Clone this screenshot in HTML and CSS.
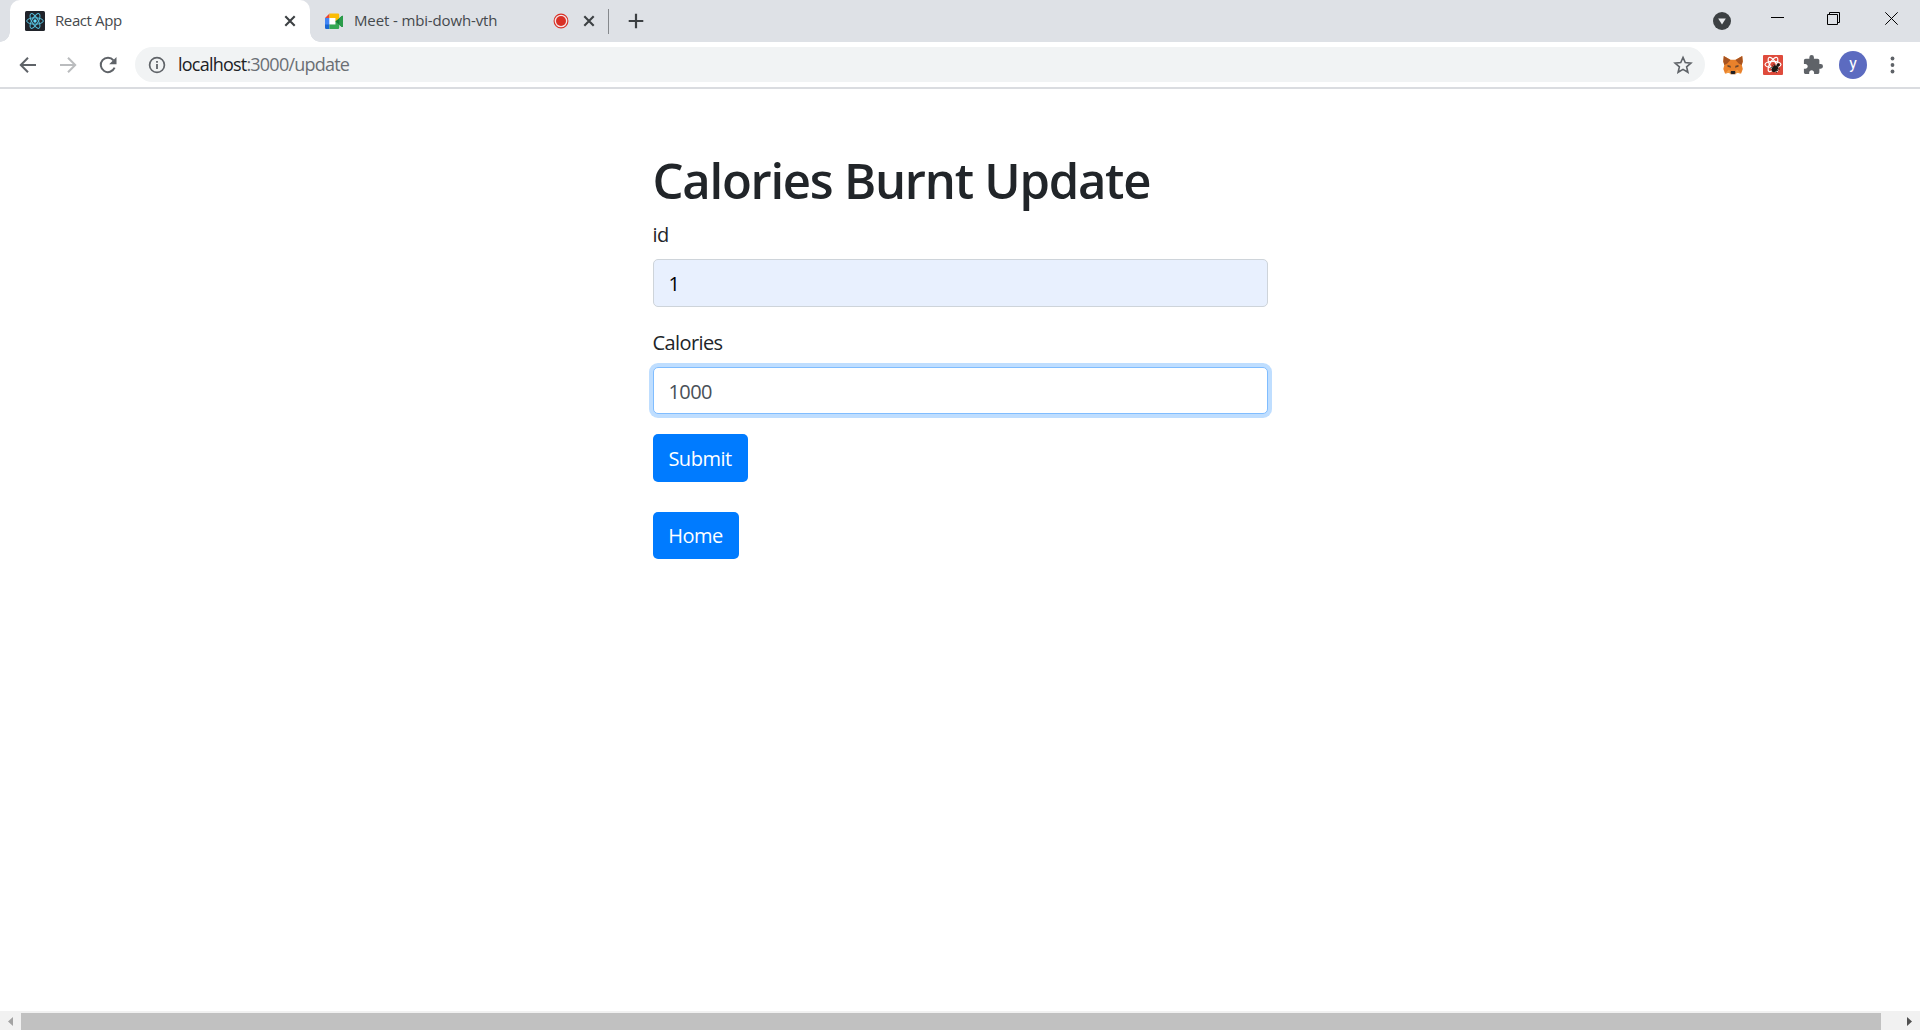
FILE: index.html
```html
<!DOCTYPE html>
<html lang="en">
<head>
<meta charset="utf-8">
<title>React App</title>
<link rel="stylesheet" href="styles.css">
</head>
<body>
<header class="tabstrip">
  <div class="tab tab-active">
    <svg class="favicon" width="20" height="20" viewBox="0 0 20 20"><rect width="20" height="20" rx="1.5" fill="#20232a"/><g fill="none" stroke="#55bfdc" stroke-width="1"><ellipse cx="10" cy="10" rx="8.3" ry="3.2"/><ellipse cx="10" cy="10" rx="8.3" ry="3.2" transform="rotate(60 10 10)"/><ellipse cx="10" cy="10" rx="8.3" ry="3.2" transform="rotate(120 10 10)"/></g><circle cx="10" cy="10" r="1.7" fill="#61dafb"/></svg>
    <span class="tab-title title-react">React App</span>
    <svg class="tab-close" width="20" height="20" viewBox="0 0 20 20"><path d="M5.3 5.3l9.4 9.4M14.7 5.3l-9.4 9.4" stroke="#3c4043" stroke-width="2.1"/></svg>
  </div>
  <div class="tab tab-meet">
    <svg class="favicon" width="20" height="20" viewBox="0 0 20 20"><path d="M1 7l4.5-4.5V7z" fill="#ea4335"/><path d="M1 7h4.5v7H1z" fill="#4285f4"/><path d="M1 13.500h4.500V18H2.200Q1 18 1 16.800z" fill="#1967d2"/><path d="M5.500 7h6v6.500h-6z" fill="#fff"/><path d="M5.500 2.500H14q1.200 0 1.200 1.200V8l-3.700 2.500V7h-6z" fill="#fbbc04"/><path d="M5.500 13.500h6V10l3.700-2v8.800q0 1.200-1.200 1.200H5.500z" fill="#34a853"/><path d="M11.500 10.500L17.800 5q1.200-.6 1.200.7v9.600q0 1.200-1.200.6z" fill="#188038"/><path d="M15.200 7.200l2.600-2.200q1.200-.6 1.200.7v9.600q0 1.200-1.200.6l-2.600-2.200z" fill="#2a9c4a"/></svg>
    <span class="tab-title title-meet">Meet - mbi-dowh-vth</span>
    <svg class="recording" width="16" height="16" viewBox="0 0 16 16"><circle cx="8" cy="8" r="6.900" fill="#f4e5e7" stroke="#d93025" stroke-width="1.100"/><circle cx="8" cy="8" r="5" fill="#d93025"/></svg>
    <svg class="tab-close" width="20" height="20" viewBox="0 0 20 20"><path d="M5.300 5.300l9.400 9.400M14.700 5.300l-9.400 9.400" stroke="#3c4043" stroke-width="2.100"/></svg>
  </div>
  <span class="tab-divider"></span>
  <svg class="new-tab" width="20" height="20" viewBox="0 0 20 20"><path d="M10 2.700v14.600M2.700 10h14.600" stroke="#3c4043" stroke-width="2.200"/></svg>
  <div class="window-controls">
    <svg class="tab-search" width="18" height="18" viewBox="0 0 18 18"><circle cx="9" cy="9" r="9" fill="#3c4043"/><path d="M5.200 6.500h7.600L9 12.500z" fill="#e8eaed"/></svg>
    <svg class="minimize" width="13" height="13" viewBox="0 0 13 13"><path d="M0 5.500h13" stroke="#000"/></svg>
    <svg class="restore" width="14" height="14" viewBox="0 0 14 14"><path d="M.5 2.500h10v10H.5zM2.500 2.500v-2h10v10h-2" fill="none" stroke="#000"/></svg>
    <svg class="close" width="13" height="13" viewBox="0 0 13 13"><path d="M.3.300l12.400 12.400M12.700.300L.300 12.700" stroke="#000"/></svg>
  </div>
</header>
<nav class="toolbar">
  <span class="tool"><svg width="20" height="20" viewBox="0 0 20 20"><path d="M18 10H3M10 2.800L2.800 10l7.200 7.200" fill="none" stroke="#5f6368" stroke-width="2"/></svg></span>
  <span class="tool"><svg width="20" height="20" viewBox="0 0 20 20"><path d="M2 10h15M10 2.800l7.200 7.200-7.200 7.200" fill="none" stroke="#babcbe" stroke-width="2"/></svg></span>
  <span class="tool"><svg width="20" height="20" viewBox="0 0 20 20"><path d="M16.600 12.700A7.200 7.200 0 1 1 15.500 5.300" fill="none" stroke="#5f6368" stroke-width="2"/><path d="M18.500 2v7.300h-7.300z" fill="#5f6368"/></svg></span>
  <div class="omnibox">
    <svg width="18" height="18" viewBox="0 0 18 18"><circle cx="9" cy="9" r="7.400" fill="none" stroke="#5f6368" stroke-width="1.700"/><path d="M9 8v5M9 4.900v1.800" stroke="#5f6368" stroke-width="1.800"/></svg>
    <span class="url"><b>localhost</b>:3000/update</span>
    <svg class="star" width="20" height="20" viewBox="0 0 20 20"><path d="M10 2.400l2.250 5.200 5.650.500-4.300 3.700 1.300 5.500-4.900-2.900-4.900 2.900 1.300-5.500-4.300-3.700 5.650-.5z" fill="none" stroke="#5f6368" stroke-width="1.600"/></svg>
  </div>
  <span class="tool"><svg width="20" height="20" viewBox="0 0 20 20"><path d="M.8 1l6.700 3.800h5L19.200 1l.6 5.500-1 3.500 1 4-1.700 4.500-4-.8-2 1.500H8l-2-1.500-4 .8L.300 14l1-4-1-3.500z" fill="#e9812b"/><path d="M.8 1l6.700 4-3.200 3.500-3 1.500-1-3.500zM19.200 1l-6.700 4 3.200 3.500 3 1.500 1-3.500z" fill="#a75320"/><path d="M4.500 10l3 .8.500 2-3.500-1zM15.500 10l-3 .8-.5 2 3.500-1z" fill="#6b472f"/><path d="M2 18.500l4-4 2 2.500v2.200l-2-1.500zM18 18.500l-4-4-2 2.500v2.200l2-1.500z" fill="#f39c45"/><path d="M8 16h4l.5 2-1 1h-3l-1-1z" fill="#211f24"/><path d="M7 18.600l1.300.6h3.400l1.300-.6-1 1.400H8z" fill="#d7c3b4"/></svg></span>
  <span class="tool"><svg width="20" height="20" viewBox="0 0 20 20"><rect width="20" height="20" rx="1" fill="#df4b3c"/><g fill="none" stroke="#fff" stroke-width="1.200"><ellipse cx="10" cy="9.500" rx="8" ry="3.200"/><ellipse cx="10" cy="9.500" rx="8" ry="3.200" transform="rotate(60 10 9.500)"/><ellipse cx="10" cy="9.500" rx="8" ry="3.200" transform="rotate(120 10 9.500)"/></g><g transform="rotate(42 12.500 13)"><ellipse cx="12.500" cy="14" rx="2.600" ry="3.800" fill="#1b1714"/><circle cx="12.500" cy="9" r="1.600" fill="#1b1714"/><path d="M8.500 11l8 5M16.500 11l-8 5M8.500 13.500h8" stroke="#1b1714" stroke-width=".8"/></g></svg></span>
  <span class="tool"><svg width="20" height="20" viewBox="1 1 22 22"><path fill="#5f6368" d="M20.500 11H19V7c0-1.100-.9-2-2-2h-4V3.500a2.500 2.500 0 0 0-5 0V5H4c-1.100 0-1.990.9-1.990 2v3.800H3.500c1.490 0 2.700 1.210 2.700 2.700s-1.210 2.700-2.700 2.700H2V20c0 1.100.9 2 2 2h3.800v-1.500c0-1.490 1.210-2.700 2.700-2.700s2.700 1.210 2.700 2.700V22H17c1.100 0 2-.9 2-2v-4h1.500a2.500 2.500 0 0 0 0-5z"/></svg></span>
  <span class="tool avatar-slot"><span class="avatar">y</span></span>
  <span class="tool"><svg width="20" height="20" viewBox="0 0 20 20"><g fill="#5f6368"><circle cx="9.500" cy="3.500" r="1.900"/><circle cx="9.500" cy="10" r="1.900"/><circle cx="9.500" cy="16.500" r="1.900"/></g></svg></span>
</nav>
<main class="page">
  <form class="update-form">
    <h1 class="heading">Calories Burnt Update</h1>
    <label class="label label-id" for="id">id</label>
    <input class="control autofilled" id="id" type="text" value="1">
    <label class="label label-calories" for="calories">Calories</label>
    <input class="control focused" id="calories" type="text" value="1000">
    <button class="button submit" type="button">Submit</button>
    <button class="button home" type="button">Home</button>
  </form>
</main>
<footer class="scrollbar">
  <svg width="21" height="19" viewBox="0 0 21 19"><path d="M13 6v9l-5-4.500z" fill="#a3a3a3"/></svg>
  <span class="thumb"></span>
  <svg width="39" height="19" viewBox="0 0 39 19"><path d="M26 6v9l5-4.500z" fill="#505050"/></svg>
</footer>
</body>
</html>
```
FILE: styles.css
```css
* { box-sizing: border-box; }
body {
  margin: 0;
  height: 1030px;
  overflow: hidden;
  display: flex;
  flex-direction: column;
  background: #fff;
  color: #212529;
  font-family: "Open Sans", "Noto Sans", sans-serif;
}
svg { display: block; flex: none; }

.tabstrip { display: flex; align-items: center; height: 42px; padding-left: 10px; background: #dee1e6; }
.tab { display: flex; align-items: center; height: 42px; width: 300px; padding: 0 10px 0 15px; }
.tab-active { position: relative; background: #fff; border-radius: 10px 10px 0 0; }
.tab-active::before, .tab-active::after {
  content: "";
  position: absolute;
  bottom: 0;
  width: 10px;
  height: 10px;
}
.tab-active::before { left: -10px; background: radial-gradient(circle at 0 0, #dee1e6 9.5px, #fff 10px); }
.tab-active::after { right: -10px; background: radial-gradient(circle at 100% 0, #dee1e6 9.5px, #fff 10px); }
.tab-title { margin-left: 10px; padding-bottom: 2px; flex: 1; font-size: 15px; line-height: 20px; color: #45494d; white-space: nowrap; }
.title-react { letter-spacing: -0.4px; }
.title-meet { letter-spacing: -0.13px; }
.tab-meet { width: 298px; padding: 0 9px 0 14px; }
.recording { margin-right: 10px; }
.tab-divider { width: 1px; height: 25px; background: #85888c; }
.new-tab { margin-left: 17px; }
.window-controls { display: flex; align-items: flex-start; height: 42px; margin-left: auto; padding: 12px 22px 0 0; }
.minimize { margin-left: 40px; }
.restore { margin-left: 43px; }
.close { margin-left: 44px; }

.toolbar { display: flex; align-items: center; height: 47px; padding: 0 7px 0 8px; border-bottom: 2px solid #dadce0; }
.tool { display: flex; align-items: center; justify-content: center; width: 40px; height: 40px; }
.omnibox { display: flex; align-items: center; flex: 1; height: 35px; margin: 0 8px 0 7px; padding: 0 12px 0 13px; border-radius: 18px; background: #f1f3f4; }
.url { flex: 1; margin-left: 12px; padding-bottom: 2px; font-size: 18px; line-height: 30px; letter-spacing: -0.78px; color: #6b6f74; }
.url b { font-weight: 400; color: #202124; }
.avatar { width: 28px; height: 28px; border-radius: 50%; background: #5c6bc0; color: #fff; font: 16px/26px Roboto, sans-serif; text-align: center; }

.page { flex: 1; display: flex; justify-content: center; padding-top: 61px; }
.update-form { display: flex; flex-direction: column; align-items: flex-start; width: 615px; }
.heading { margin: 0 0 10px; font-size: 49px; line-height: 60px; font-weight: 600; letter-spacing: -1.25px; white-space: nowrap; }
.label { font-size: 20px; line-height: 30px; letter-spacing: -0.6px; }
.label-id { margin-bottom: 9px; }
.label-calories { margin: 21px 0 9px; }
.control {
  width: 615px;
  height: 48px;
  padding: 7px 15px;
  border: 1px solid #ced4da;
  border-radius: 5px;
  font: 20px/30px "Open Sans", "Noto Sans", sans-serif;
  letter-spacing: -0.6px;
  color: #495057;
  background: #fff;
  outline: none;
}
.autofilled { background: #e8f0fe; color: #000; }
.focused { height: 47px; padding: 8px 15px 6px; border-color: #80bdff; box-shadow: 0 0 0 4px #bfdeff; }
.button {
  height: 48px;
  padding: 0;
  border: 0;
  border-radius: 5px;
  background: #007bff;
  color: #fff;
  font: 20px/30px "Open Sans", "Noto Sans", sans-serif;
  letter-spacing: -0.5px;
}
.submit { width: 95px; margin-top: 20px; padding-top: 1px; }
.home { width: 86px; height: 47px; margin-top: 30px; }

.scrollbar { display: flex; align-items: flex-end; height: 19px; background: #f1f1f1; }
.thumb { flex: 1; height: 17px; background: #c1c1c1; }
```
